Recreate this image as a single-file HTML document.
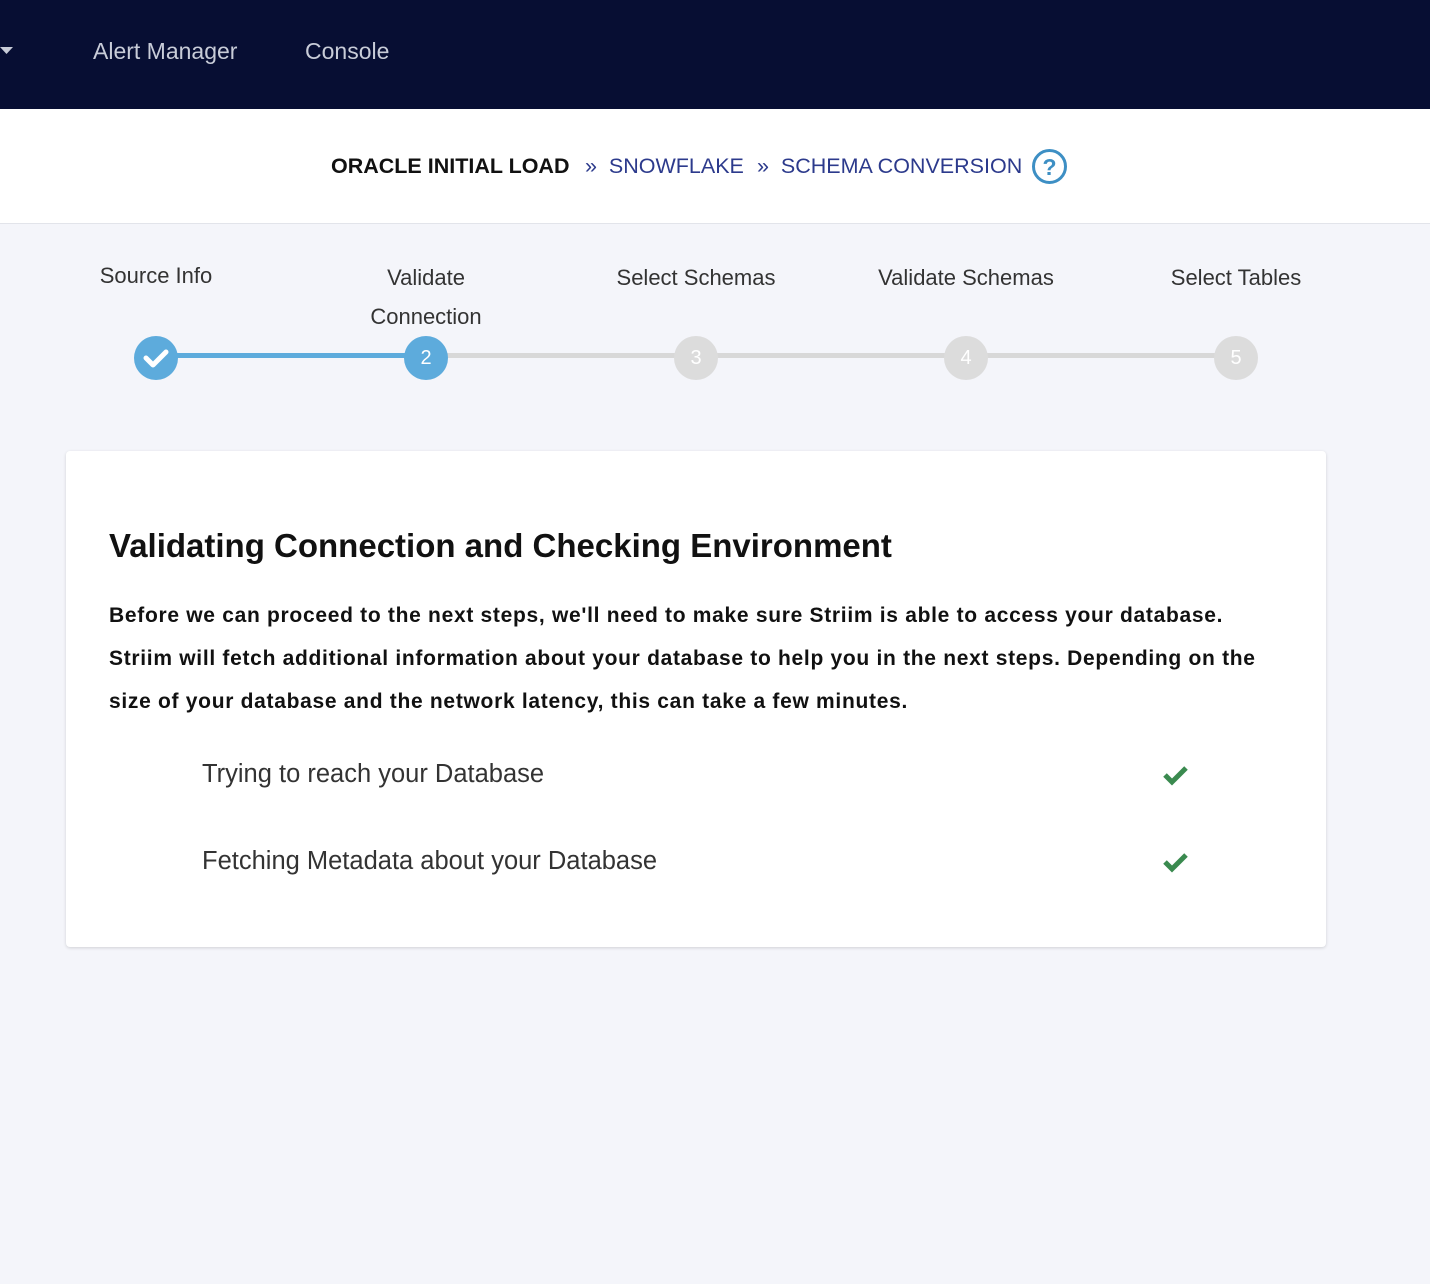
<!DOCTYPE html>
<html><head><style>
*{margin:0;padding:0;box-sizing:border-box}
body{width:1430px;height:1284px;background:#f4f5fa;font-family:"Liberation Sans",sans-serif;position:relative;overflow:hidden}
.nav{position:absolute;left:0;top:0;width:1430px;height:109px;background:#070e33}
.nav span{position:absolute;top:38px;color:#c8ccd8;font-size:23px}
.crumb{position:absolute;left:0;top:109px;width:1430px;height:115px;background:#fff;border-bottom:1px solid #e2e4ea}
.crumb div{position:absolute;top:45px;font-size:21.5px;white-space:nowrap}
.step{position:absolute;font-size:22px;color:#333;text-align:center;width:260px;line-height:39px;font-weight:300}
.line{position:absolute;height:5px;top:353px}
.c{position:absolute;width:44px;height:44px;border-radius:50%;top:336px;color:#fff;font-size:20px;text-align:center;line-height:44px}
.card{position:absolute;left:66px;top:451px;width:1260px;height:496px;background:#fff;border-radius:4px;box-shadow:0 1px 3px rgba(0,0,0,.15)}
h1{position:absolute;left:43px;top:76px;font-size:33px;color:#111;white-space:nowrap}
p{position:absolute;left:43px;top:143px;width:1220px;font-size:21px;letter-spacing:0.7px;font-weight:bold;line-height:43px;color:#111;white-space:nowrap}
.it{position:absolute;left:136px;font-size:25.5px;color:#333}
.ck{position:absolute;left:1096px}
</style></head><body>
<div class="nav">
<svg style="position:absolute;left:0;top:47px" width="14" height="8"><path d="M0 0H13L6.5 7Z" fill="#c8ccd8"/></svg>
<span style="left:93px">Alert Manager</span><span style="left:305px">Console</span></div>
<div class="crumb">
<div style="left:331px;font-weight:bold;color:#111">ORACLE INITIAL LOAD</div>
<div style="left:585px;color:#2c3a8c">»&nbsp; SNOWFLAKE</div>
<div style="left:757px;color:#2c3a8c">»&nbsp; SCHEMA CONVERSION</div>
<svg style="position:absolute;left:1031px;top:39px" width="37" height="37"><circle cx="18.5" cy="18.5" r="16" fill="none" stroke="#3d8fc4" stroke-width="3"/><text x="18.5" y="27" text-anchor="middle" font-family="Liberation Sans" font-weight="bold" font-size="23" fill="#3d8fc4">?</text></svg>
</div>
<div class="step" style="left:26px;top:256px">Source Info</div>
<div class="step" style="left:296px;top:258px">Validate<br>Connection</div>
<div class="step" style="left:566px;top:258px">Select Schemas</div>
<div class="step" style="left:836px;top:258px">Validate Schemas</div>
<div class="step" style="left:1106px;top:258px">Select Tables</div>
<div class="line" style="left:156px;width:270px;background:#5dabdc"></div>
<div class="line" style="left:426px;width:810px;background:#d8d8d8"></div>
<div class="c" style="left:134px;background:#5dabdc"><svg width="44" height="44" style="position:absolute;left:0;top:0"><path d="M12 22L19 29L32 16" fill="none" stroke="#fff" stroke-width="5" stroke-linecap="round" stroke-linejoin="round"/></svg></div>
<div class="c" style="left:404px;background:#5dabdc">2</div>
<div class="c" style="left:674px;background:#dcdcdc">3</div>
<div class="c" style="left:944px;background:#dcdcdc">4</div>
<div class="c" style="left:1214px;background:#dcdcdc">5</div>
<div class="card">
<h1>Validating Connection and Checking Environment</h1>
<p>Before we can proceed to the next steps, we'll need to make sure Striim is able to access your database.<br>Striim will fetch additional information about your database to help you in the next steps. Depending on the<br>size of your database and the network latency, this can take a few minutes.</p>
<div class="it" style="top:309px">Trying to reach your Database</div>
<div class="it" style="top:396px">Fetching Metadata about your Database</div>
<svg class="ck" style="top:313px" width="28" height="22"><path d="M3 11L10 18L24 4" fill="none" stroke="#3a8a4f" stroke-width="5"/></svg>
<svg class="ck" style="top:400px" width="28" height="22"><path d="M3 11L10 18L24 4" fill="none" stroke="#3a8a4f" stroke-width="5"/></svg>
</div>
</body></html>
